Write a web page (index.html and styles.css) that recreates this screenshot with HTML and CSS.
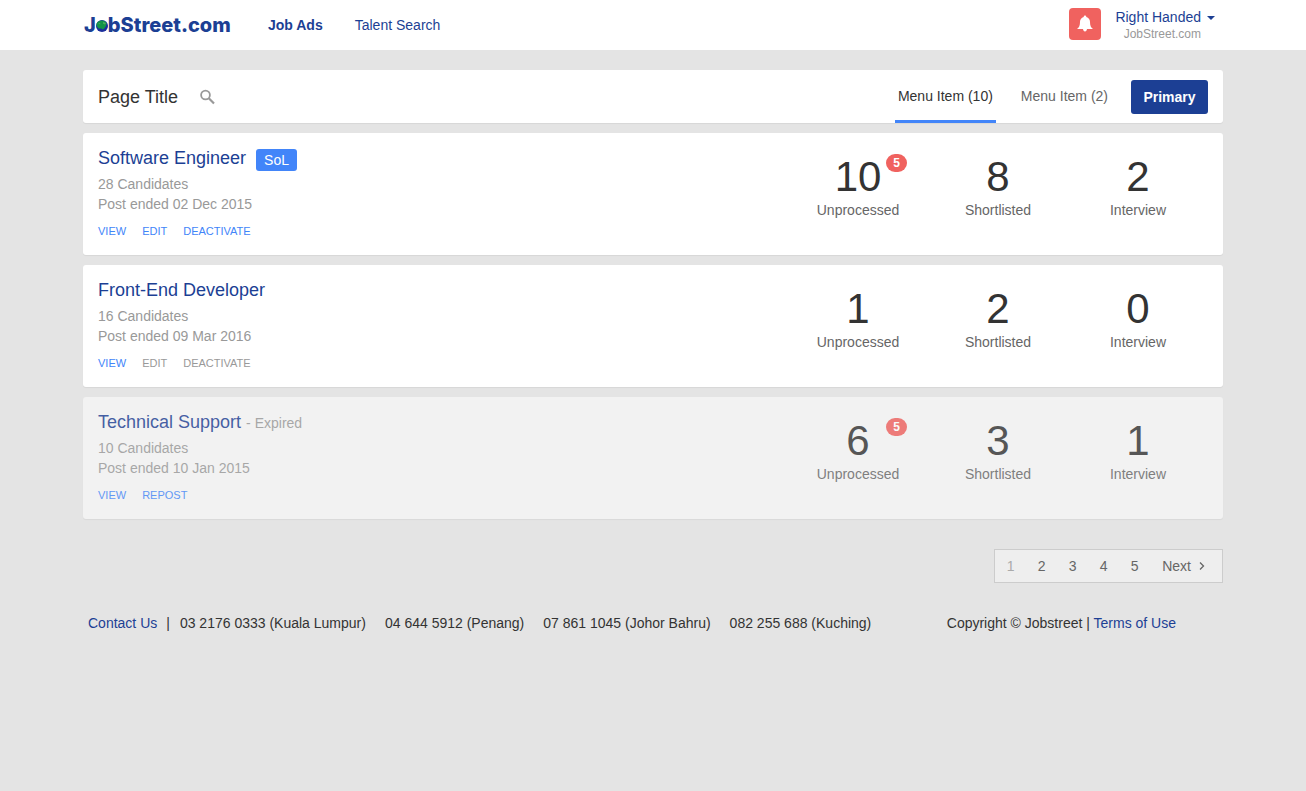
FILE: index.html
```html
<!DOCTYPE html>
<html lang="en">
<head>
<meta charset="utf-8">
<meta name="viewport" content="width=device-width, initial-scale=1">
<title>Job Ads</title>
<link rel="stylesheet" href="styles.css">
</head>
<body>
<header class="topbar">
  <div class="container topbar-inner">
    <a class="logo" href="#" aria-label="JobStreet.com"><span>J</span><svg class="globe" viewBox="0 0 12 12" aria-hidden="true"><circle cx="6" cy="6" r="6" fill="#1c2f9c"/><path d="M.6 3.500C1.600 1.400 4 .3 6 .4c2 .1 3.800 1.200 4.700 2.800L10 6 8.300 8.600 6.800 9.600 5.400 8.600 2.600 8.400.6 6z" fill="#149447"/><path d="M7 2l3 1-1 1.400-2-.6zM2 4l2-1 .5 1.200z" fill="#4dac62"/></svg><span>bStreet.com</span></a>
    <nav class="main-nav">
      <a class="active" href="#">Job Ads</a>
      <a href="#">Talent Search</a>
    </nav>
    <button class="bell" type="button" aria-label="Notifications"><svg viewBox="0 0 18 18" aria-hidden="true"><path d="M9 .5c.8 0 1.300.6 1.300 1.400C12.800 2.600 14 4.500 14 7c0 3.600.8 5.300 3 7H11c-.2 1.500-.9 2.500-2 2.500S7.200 15.500 7 14H1c2.200-1.700 3-3.400 3-7 0-2.500 1.200-4.400 3.700-5.100C7.700 1.100 8.200.5 9 .5z" fill="#fff"/></svg></button>
    <button class="account" type="button">
      <span class="account-text"><span class="account-name">Right Handed</span><span class="account-org">JobStreet.com</span></span>
      <span class="caret"></span>
    </button>
  </div>
</header>

<main class="container content">
  <section class="panel page-head">
    <h1>Page Title</h1>
    <button class="search" type="button" aria-label="Search"><svg viewBox="0 0 16 16" aria-hidden="true"><circle cx="5.500" cy="6" r="4.400" fill="none" stroke="#999" stroke-width="1.800"/><path d="M8.800 9.300l5.200 5.200" stroke="#999" stroke-width="2.200"/></svg></button>
    <nav class="tabs">
      <a class="tab current" href="#">Menu Item (10)</a>
      <a class="tab" href="#">Menu Item (2)</a>
    </nav>
    <button class="primary" type="button">Primary</button>
  </section>

  <article class="panel job">
    <div class="job-info">
      <h2><a href="#">Software Engineer</a><span class="tag">SoL</span></h2>
      <p>28 Candidates</p>
      <p>Post ended 02 Dec 2015</p>
      <div class="actions"><a href="#">VIEW</a><a href="#">EDIT</a><a href="#">DEACTIVATE</a></div>
    </div>
    <div class="stats">
      <div class="stat"><strong>10</strong><span>Unprocessed</span><em class="badge">5</em></div>
      <div class="stat"><strong>8</strong><span>Shortlisted</span></div>
      <div class="stat"><strong>2</strong><span>Interview</span></div>
    </div>
  </article>

  <article class="panel job">
    <div class="job-info">
      <h2><a href="#">Front-End Developer</a></h2>
      <p>16 Candidates</p>
      <p>Post ended 09 Mar 2016</p>
      <div class="actions"><a href="#">VIEW</a><a class="disabled">EDIT</a><a class="disabled">DEACTIVATE</a></div>
    </div>
    <div class="stats">
      <div class="stat"><strong>1</strong><span>Unprocessed</span></div>
      <div class="stat"><strong>2</strong><span>Shortlisted</span></div>
      <div class="stat"><strong>0</strong><span>Interview</span></div>
    </div>
  </article>

  <article class="panel job expired">
    <div class="job-info">
      <h2><a href="#">Technical Support</a><small>- Expired</small></h2>
      <p>10 Candidates</p>
      <p>Post ended 10 Jan 2015</p>
      <div class="actions"><a href="#">VIEW</a><a href="#">REPOST</a></div>
    </div>
    <div class="stats">
      <div class="stat"><strong>6</strong><span>Unprocessed</span><em class="badge">5</em></div>
      <div class="stat"><strong>3</strong><span>Shortlisted</span></div>
      <div class="stat"><strong>1</strong><span>Interview</span></div>
    </div>
  </article>

  <nav class="pagination" aria-label="Pages">
    <a class="here">1</a><a href="#">2</a><a href="#">3</a><a href="#">4</a><a href="#">5</a>
    <a class="next" href="#">Next<svg viewBox="0 0 6 8" aria-hidden="true"><path d="M1 .5L4.500 4 1 7.500" fill="none" stroke="#666" stroke-width="1.300"/></svg></a>
  </nav>
</main>

<footer class="container footer">
  <div class="contacts">
    <span class="contact-link"><a href="#">Contact Us</a><span>|</span></span>
    <span>03 2176 0333 (Kuala Lumpur)</span>
    <span>04 644 5912 (Penang)</span>
    <span>07 861 1045 (Johor Bahru)</span>
    <span>082 255 688 (Kuching)</span>
  </div>
  <div class="legal">Copyright © Jobstreet | <a href="#">Terms of Use</a></div>
</footer>
</body>
</html>
```

FILE: styles.css
```css
* { box-sizing: border-box; }
body {
  margin: 0;
  background: #e4e4e4;
  color: #333;
  font: 14px/20px "Liberation Sans", Arial, sans-serif;
}
a { color: #1c3f94; text-decoration: none; }
button { border: 0; padding: 0; background: none; font: inherit; cursor: pointer; }
svg { display: block; }
h1, h2, p { margin: 0; font-weight: normal; }
.container { width: 100%; max-width: 1140px; margin: 0 auto; }

.topbar { background: #fff; }
.topbar-inner { display: flex; align-items: center; height: 50px; padding-right: 8px; }
.logo {
  display: flex;
  align-items: center;
  width: 149px;
  padding-left: 1px;
  font-family: Inter, "Liberation Sans", sans-serif;
  font-size: 20px;
  font-weight: 800;
  line-height: 24px;
}
.globe { flex: none; width: 12px; height: 12px; margin-top: 2px; }
.main-nav { display: flex; gap: 32px; margin-left: 36px; }
.main-nav .active { font-weight: bold; }
.bell {
  display: flex;
  align-items: center;
  justify-content: center;
  width: 32px;
  height: 32px;
  margin: 0 14px 2px auto;
  border-radius: 4px;
  background: #f0625f;
}
.bell svg { width: 18px; height: 18px; }
.account { display: flex; align-items: flex-start; gap: 6px; text-align: right; }
.account-text { display: flex; flex-direction: column; }
.account-name { color: #1c3f94; line-height: 18px; }
.account-org { color: #999; font-size: 12px; line-height: 16px; }
.caret {
  margin-top: 8px;
  border: 4px solid transparent;
  border-top-color: #1c3f94;
  border-bottom: 0;
}

.content { display: flex; flex-direction: column; gap: 10px; padding-top: 20px; }
.panel { padding: 0 15px; border-radius: 3px; background: #fff; box-shadow: 0 1px 1px rgba(0, 0, 0, .06); }
.page-head { display: flex; align-items: center; height: 53px; }
.page-head h1 { font-size: 18px; line-height: 24px; }
.search { margin-left: 22px; }
.search svg { width: 16px; height: 16px; }
.tabs { display: flex; align-self: stretch; gap: 22px; margin-left: auto; }
.tab { padding: 16px 3px 14px; border-bottom: 3px solid transparent; color: #666; }
.tab.current { border-color: #4285f9; color: #333; }
.primary {
  width: 77px;
  height: 34px;
  margin-left: 20px;
  border-radius: 3px;
  background: #1c3f94;
  color: #fff;
  font-weight: bold;
}

.job { display: flex; justify-content: space-between; min-height: 122px; padding-top: 13px; }
.job h2 { display: flex; align-items: center; height: 26px; padding-bottom: 2px; font-size: 18px; line-height: 24px; }
.job p { color: #999; }
.job h2 + p { margin-top: 2px; }
.tag {
  margin: 4px 0 0 10px;
  padding: 1px 8px;
  border-radius: 3px;
  background: #4285f9;
  color: #fff;
  font-size: 14px;
  line-height: 20px;
}
.job small { margin: 2px 0 0 5px; color: #999; font-size: 14px; }
.actions { display: flex; gap: 16px; margin-top: 7px; font-size: 11px; }
.actions a { color: #4285f9; }
.actions .disabled { color: #999; }
.stats { display: grid; grid-template-columns: repeat(3, 140px); align-content: start; padding-top: 8px; }
.stat { position: relative; display: flex; flex-direction: column; align-items: center; }
.stat strong { font-size: 42px; font-weight: normal; line-height: 46px; }
.stat span { color: #666; }
.badge {
  position: absolute;
  top: 0;
  right: 21px;
  padding: 0 7px;
  border-radius: 9px;
  background: #f0625f;
  color: #fff;
  font-size: 12px;
  font-style: normal;
  font-weight: bold;
  line-height: 18px;
}
.expired { background: #f6f6f6; opacity: .8; }

.pagination {
  display: flex;
  align-self: flex-end;
  margin-top: 20px;
  padding: 0 17px 0 0;
  border: 1px solid #ccc;
  background: #eee;
  line-height: 32px;
}
.pagination a { width: 31px; color: #666; text-align: center; }
.pagination .here { color: #aaa; }
.pagination .next { display: flex; align-items: center; gap: 8px; width: auto; padding-left: 12px; }
.next svg { width: 6px; height: 8px; }

.footer { display: flex; gap: 20px; justify-content: space-between; padding: 30px 47px 30px 5px; }
.contacts { display: flex; flex-wrap: wrap; gap: 0 19px; }
.contact-link { display: flex; gap: 9px; margin-right: -9px; }
```
